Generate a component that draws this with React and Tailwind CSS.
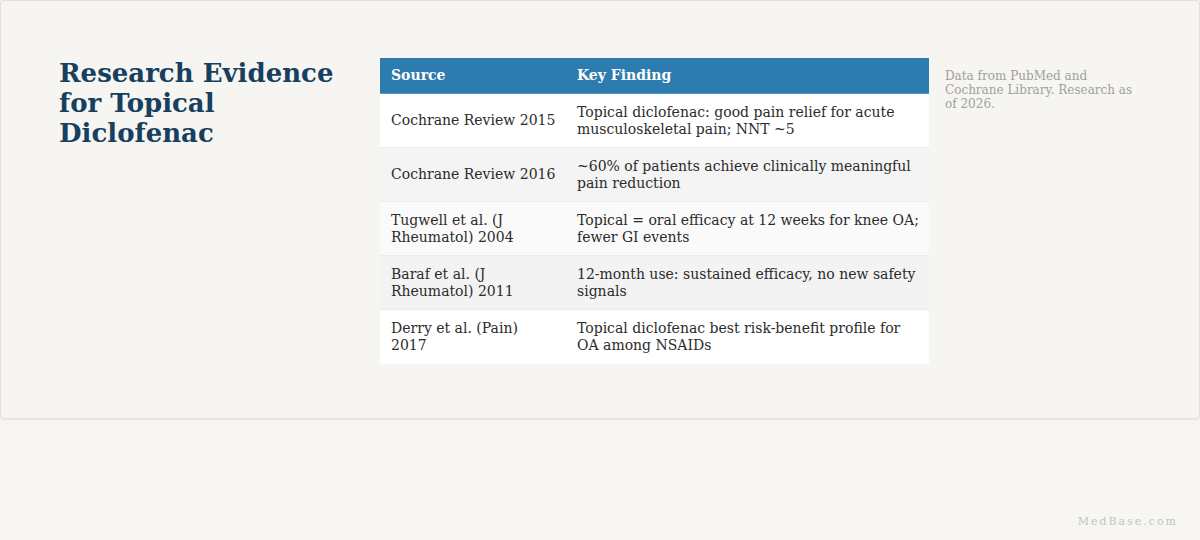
export default function App() {
  const rows = [
    ["Cochrane Review 2015", "Topical diclofenac: good pain relief for acute musculoskeletal pain; NNT ~5", "bg-white"],
    ["Cochrane Review 2016", "~60% of patients achieve clinically meaningful pain reduction", "bg-[#f4f4f4]"],
    ["Tugwell et al. (J Rheumatol) 2004", "Topical = oral efficacy at 12 weeks for knee OA; fewer GI events", "bg-[#fafafa]"],
    ["Baraf et al. (J Rheumatol) 2011", "12-month use: sustained efficacy, no new safety signals", "bg-[#f3f3f3]"],
    ["Derry et al. (Pain) 2017", "Topical diclofenac best risk-benefit profile for OA among NSAIDs", "bg-white"],
  ];
  return (
    <div className="w-[1200px] h-[540px] bg-[#f7f6f2] relative overflow-hidden" style={{ fontFamily: '"DejaVu Serif", serif' }}>
      <div className="h-[419px] bg-[#f6f5f1] border border-[#e3e1d9] rounded-[3px] shadow-[0_1px_2px_rgba(0,0,0,0.06)] flex pt-[57px]">
        <div className="w-[340px] pl-[58px] pr-[2px] shrink-0">
          <h1 className="text-[26px] font-bold leading-[30px] text-[#173f5f]">Research Evidence for Topical Diclofenac</h1>
        </div>
        <div className="w-[549px] ml-[39px] shrink-0">
          <table className="w-[549px] table-fixed border-collapse text-[14px] leading-[17px]">
            <colgroup>
              <col className="w-[187px]" />
              <col />
            </colgroup>
            <thead>
              <tr className="bg-[#2e7bb0] text-white">
                <th className="text-left font-bold pl-[11px] pr-[11px] pt-[9px] pb-[9px] border-b border-[#5a9acb]">Source</th>
                <th className="text-left font-bold px-[10px] pt-[9px] pb-[9px] border-b border-[#5a9acb]">Key Finding</th>
              </tr>
            </thead>
            <tbody className="text-[#2b2b2b]">
              {rows.map(([s, f, bg], i) => (
                <tr key={i} className={`${bg} h-[54px] border-b border-[#ececec] last:border-b-0`}>
                  <td className="pl-[11px] pr-[11px] py-[9px] align-middle">{s}</td>
                  <td className="px-[10px] py-[9px] align-middle">{f}</td>
                </tr>
              ))}
            </tbody>
          </table>
        </div>
        <div className="w-[200px] ml-[16px] pt-[11px] shrink-0">
          <p className="text-[12px] leading-[14px] text-[#a0a0a0]">Data from PubMed and Cochrane Library. Research as of 2026.</p>
        </div>
      </div>
      <div className="absolute right-[22px] top-[514px] text-[11px] tracking-[2px] text-[#c2c2c0]">MedBase.com</div>
    </div>
  );
}
